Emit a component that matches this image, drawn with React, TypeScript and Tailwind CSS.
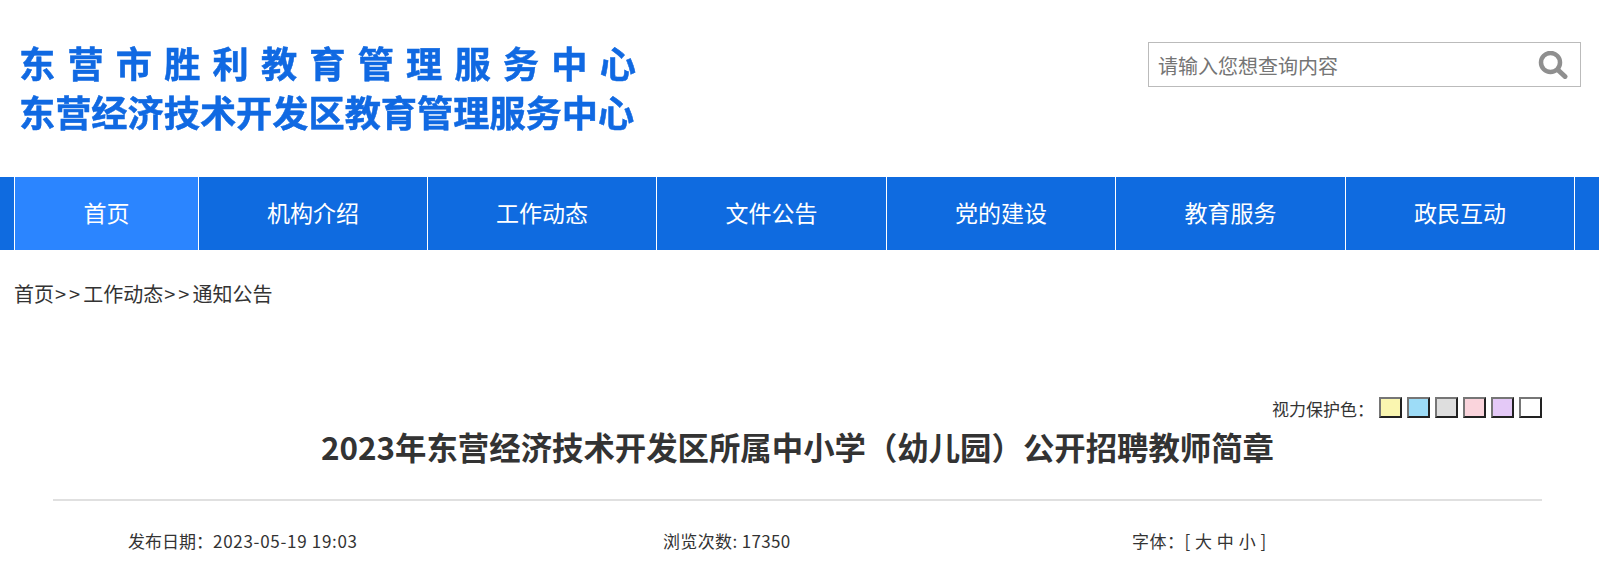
import React from 'react';

const FONT = "font-['Noto_Sans_CJK_SC','Microsoft_YaHei',sans-serif]";

const navItems = [
  { label: '首页', width: 'w-[184px] bg-[#2b85ff]' },
  { label: '机构介绍', width: 'w-[229px]' },
  { label: '工作动态', width: 'w-[229px]' },
  { label: '文件公告', width: 'w-[230px]' },
  { label: '党的建设', width: 'w-[229px]' },
  { label: '教育服务', width: 'w-[230px]' },
  { label: '政民互动', width: 'w-[229px]' },
];

const eyeColors = [
  'bg-[#faf6b0]',
  'bg-[#9ddcf7]',
  'bg-[#dedede]',
  'bg-[#fad4dc]',
  'bg-[#e4c9f7]',
  'bg-white',
];

const SearchIcon = () => (
  <svg width="30" height="28" viewBox="0 0 30 28" fill="none" className="blur-[0.4px]">
    <circle cx="12.5" cy="11.5" r="9.5" stroke="#8f8f8f" strokeWidth="4.5" />
    <path d="M20 19l7 6.5" stroke="#8f8f8f" strokeWidth="5" strokeLinecap="round" />
  </svg>
);

const App: React.FC = () => {
  return (
    <div className={`h-[575px] overflow-hidden bg-white text-[#333] ${FONT}`}>
      <header className="h-[177px] flex items-start justify-between pl-[19px] pr-[18px]">
        <div className="pt-[38px] text-[#1069e2] font-bold blur-[0.4px] [-webkit-text-stroke:0.5px_#1069e2]">
          <p className="text-[36.2px] leading-[49px] tracking-[12.2px] whitespace-nowrap">东营市胜利教育管理服务中心</p>
          <p className="text-[36.2px] leading-[49px] whitespace-nowrap">东营经济技术开发区教育管理服务中心</p>
        </div>
        <div className="mt-[42px] w-[433px] h-[45px] border border-[#bbb] flex items-center justify-between pl-[9px] pr-[12px]">
          <span className="text-[20px] text-[#757575] pt-[2px]">请输入您想查询内容</span>
          <SearchIcon />
        </div>
      </header>

      <nav className="h-[73px] flex bg-[#0f6be0]">
        <div className="w-[14px]" />
        {navItems.map((item) => (
          <a
            key={item.label}
            className={`flex items-center justify-center border-l border-white pb-[3px] text-[23px] text-white ${item.width}`}
          >
            {item.label}
          </a>
        ))}
        <div className="flex-1 border-l border-white" />
      </nav>

      <div className="pl-[14px] pt-[28px] text-[20px] leading-[32px] h-[147px]">
        首页<span className="ml-[1px] tracking-[3px]">&gt;&gt;</span>工作动态<span className="ml-[1px] tracking-[3px]">&gt;&gt;</span>通知公告
      </div>

      <div className="ml-[53px] mr-[57px]">
        <div className="flex items-center justify-end h-[21px] text-[17px]">
          <span className="mr-[5px] mt-[3px]">视力保护色：</span>
          <div className="flex gap-[5px]">
            {eyeColors.map((color) => (
              <button
                key={color}
                className={`w-[23px] h-[21px] border-2 border-t-[#767676] border-l-[#767676] border-r-[#222] border-b-[#222] ${color}`}
              />
            ))}
          </div>
        </div>
        <h1 className="mt-[4px] text-center text-[31.4px] font-bold leading-[50px] text-[#333]">
          2023年东营经济技术开发区所属中小学（幼儿园）公开招聘教师简章
        </h1>
        <div className="mt-[27px] border-t-2 border-[#e0e0e0]" />
        <div className="mt-[28px] grid grid-cols-[535px_469px_1fr] text-[17px] leading-[24px]">
          <div className="pl-[75px]">
            发布日期：<span className="tracking-[0.7px]">2023-05-19 19:03</span>
          </div>
          <div className="pl-[75px] tracking-[0.36px]">浏览次数: 17350</div>
          <div className="pl-[75px] tracking-[0.5px]">字体：[ 大 中 小 ]</div>
        </div>
      </div>
    </div>
  );
};

export default App;
